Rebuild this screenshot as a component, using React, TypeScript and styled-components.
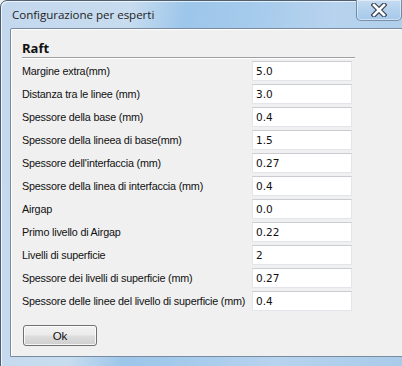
import React from "react";
import styled, { createGlobalStyle } from "styled-components";

const Global = createGlobalStyle`
  html, body { margin: 0; padding: 0; background: #eef0f2; }
  body { width: 402px; height: 366px; overflow: hidden; }
`;

const Window = styled.div`
  box-sizing: border-box;
  width: 404px;
  height: 370px;
  border: 1px solid #4e5f72;
  border-radius: 7px 7px 0 0;
  background: linear-gradient(100deg, #c3d8ee 0%, #c8dcef 28%, #9cc6ea 40%, #a6cbec 55%, #b7d3ee 72%, #a9cbe9 100%);
  display: flex;
  flex-direction: column;
  box-shadow: inset 1px 1px 0 rgba(255,255,255,0.7);
`;

const TitleBar = styled.div`
  height: 26px;
  display: flex;
  align-items: flex-start;
  justify-content: space-between;
  padding-left: 11px;
`;

const Title = styled.div`
  font-family: "Segoe UI", "Open Sans", "Noto Sans", sans-serif;
  font-size: 11.6px;
  color: #1e1e1e;
  margin-top: 6px;
  letter-spacing: -0.05px;
`;

const CloseButton = styled.div`
  box-sizing: border-box;
  width: 46px;
  height: 21px;
  margin-top: -1px;
  margin-right: 1px;
  border: 1px solid rgba(60, 80, 110, 0.55);
  border-top: none;
  border-radius: 0 0 5px 5px;
  background: linear-gradient(#c6dcf1, #b3d1ee 50%, #a6c9ea);
  box-shadow: inset 0 0 0 1px rgba(255,255,255,0.45);
  display: flex;
  align-items: center;
  justify-content: center;
`;

const Client = styled.div`
  box-sizing: border-box;
  margin: 1px 0 0 9px;
  flex: 0 0 329px;
  background: #f0f0f0;
  border: 1px solid #7a8aa0;
  border-radius: 2px 2px 0 0;
  box-shadow: inset 1px 1px 0 #ffffff;
  padding: 10px 11px 0 11px;
  font-family: Tahoma, "DejaVu Sans", "Liberation Sans", sans-serif;
  font-size: 11px;
  color: #000;
`;

const Heading = styled.div`
  font-family: "Segoe UI", "Open Sans", "Noto Sans", sans-serif;
  font-weight: bold;
  font-size: 13px;
  line-height: 18px;
  color: #111;
  width: 333px;
  border-bottom: 1px solid #a0a0a0;
  box-shadow: 0 1px 0 #ffffff;
`;

const Form = styled.div`
  display: grid;
  grid-template-columns: 230px 100px;
  row-gap: 3px;
  margin-top: 3px;
`;

const Label = styled.div`
  font-family: "Liberation Sans", sans-serif;
  font-size: 10.8px;
  letter-spacing: -0.2px;
  height: 20px;
  line-height: 20px;
  white-space: nowrap;
  color: #111;
`;

const Field = styled.input`
  box-sizing: border-box;
  width: 100px;
  height: 20px;
  margin: 0;
  padding: 0 0 0 3px;
  border: 1px solid #e2e5ea;
  border-top-color: #c9ccd1;
  background: #fff;
  font-family: "DejaVu Sans", sans-serif;
  font-size: 10.5px;
  color: #111;
  outline: none;
`;

const Footer = styled.div`
  padding-top: 14px;
  padding-left: 1px;
`;

const Button = styled.button`
  box-sizing: border-box;
  width: 74px;
  height: 21px;
  border: 1px solid #707070;
  border-radius: 3px;
  background: linear-gradient(#f2f2f2 0%, #ebebeb 48%, #dddddd 52%, #cfcfcf 100%);
  box-shadow: inset 0 0 0 1px rgba(255,255,255,0.8);
  font-family: "Liberation Sans", sans-serif;
  font-size: 11.5px;
  color: #111;
  padding: 0;
`;

const rows: [string, string][] = [
  ["Margine extra(mm)", "5.0"],
  ["Distanza tra le linee (mm)", "3.0"],
  ["Spessore della base (mm)", "0.4"],
  ["Spessore della lineea di base(mm)", "1.5"],
  ["Spessore dell'interfaccia (mm)", "0.27"],
  ["Spessore della linea di interfaccia (mm)", "0.4"],
  ["Airgap", "0.0"],
  ["Primo livello di Airgap", "0.22"],
  ["Livelli di superficie", "2"],
  ["Spessore dei livelli di superficie (mm)", "0.27"],
  ["Spessore delle linee del livello di superficie (mm)", "0.4"],
];

const CloseGlyph = () => (
  <svg width="16" height="14" viewBox="0 0 16 14">
    <path d="M3 2 L13 12 M13 2 L3 12" stroke="#3b4656" strokeWidth="5" strokeLinecap="square" />
    <path d="M3 2 L13 12 M13 2 L3 12" stroke="#ffffff" strokeWidth="2.6" strokeLinecap="square" />
  </svg>
);

export default function App() {
  return (
    <>
      <Global />
      <Window>
        <TitleBar>
          <Title>Configurazione per esperti</Title>
          <CloseButton>
            <CloseGlyph />
          </CloseButton>
        </TitleBar>
        <Client>
          <Heading>Raft</Heading>
          <Form>
            {rows.map(([l, v]) => (
              <React.Fragment key={l}>
                <Label>{l}</Label>
                <Field defaultValue={v} />
              </React.Fragment>
            ))}
          </Form>
          <Footer>
            <Button>Ok</Button>
          </Footer>
        </Client>
      </Window>
    </>
  );
}
